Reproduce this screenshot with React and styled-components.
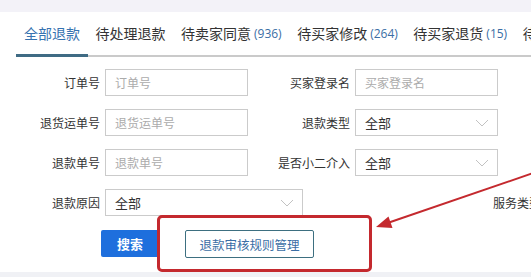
import React from "react"
import styled, { createGlobalStyle } from "styled-components"

const GlobalStyle = createGlobalStyle`
  html, body {
    margin: 0;
    padding: 0;
    background: #f0f1f5;
    font-family: "Noto Sans CJK SC", "Noto Sans", sans-serif;
    overflow: hidden;
  }
`

const Page = styled.div`
  position: relative;
  width: 531px;
  height: 277px;
  overflow: hidden;
  background: #f0f1f5;
`

const TopBand = styled.div`
  height: 12px;
  background: #f3f2f8;
`

const Panel = styled.div`
  background: #fff;
  height: 260px;
`

const TabBar = styled.div`
  display: flex;
  margin-left: 16px;
  box-shadow: inset 0 -2px 0 #cacaca;
  white-space: nowrap;
`

const Tab = styled.div`
  display: flex;
  align-items: center;
  box-sizing: border-box;
  height: 45px;
  padding: 0 7.5px 0 8px;
  font-size: 14px;
  color: ${p => (p.$active ? "#3672b0" : "#333")};
  border-bottom: 3px solid ${p => (p.$active ? "#3f6b84" : "transparent")};
`

const Count = styled.span`
  margin-left: 3px;
  font-family: "Open Sans", "Liberation Sans", sans-serif;
  font-size: 12px;
  color: #3a6ea5;
`

const Form = styled.div`
  display: flex;
  flex-direction: column;
  gap: 13px;
  padding: 12px 0 0 16px;
`

const Row = styled.div`
  display: flex;
  align-items: center;
  gap: 18px;
`

const Field = styled.div`
  display: flex;
  align-items: center;
  gap: 5px;
  margin-left: ${p => p.$offset || 0}px;
`

const Label = styled.div`
  width: ${p => (p.$w ? p.$w + "px" : "auto")};
  text-align: right;
  font-size: 12px;
  color: #333;
  white-space: nowrap;
`

const Box = styled.div`
  box-sizing: border-box;
  width: ${p => p.$w || 143}px;
  height: 27px;
  border: 1px solid #cbcbcb;
  display: flex;
  align-items: center;
  justify-content: space-between;
  padding: 0 8px 0 9px;
  font-size: ${p => (p.$placeholder ? 12 : 13)}px;
  color: ${p => (p.$placeholder ? "#ababab" : "#333")};
`

const Chevron = () => (
  <svg width="14" height="8" viewBox="0 0 14 8">
    <polyline points="1,1 7,7 13,1" fill="none" stroke="#c2c2c2" strokeWidth="1" />
  </svg>
)

const Buttons = styled.div`
  display: flex;
  gap: 26px;
  margin: 1px 0 0 85px;
`

const SearchButton = styled.div`
  width: 58px;
  height: 27px;
  display: flex;
  align-items: center;
  justify-content: center;
  background: #1e6fdd;
  border-radius: 2px;
  color: #fff;
  font-size: 13px;
  font-weight: 600;
`

const RuleButton = styled.div`
  box-sizing: border-box;
  width: 129px;
  height: 28px;
  display: flex;
  align-items: center;
  justify-content: center;
  border: 1px solid #3d6f80;
  border-radius: 2px;
  color: #3a6ea5;
  font-size: 12.5px;
`

const Highlight = styled.div`
  position: absolute;
  left: 157px;
  top: 215px;
  width: 215px;
  height: 57px;
  box-sizing: border-box;
  border: 3px solid #c4292e;
  border-radius: 5px;
  pointer-events: none;
`

const ArrowLayer = styled.svg`
  position: absolute;
  left: 0;
  top: 0;
  pointer-events: none;
`

const Input = ({ w, children }) => (
  <Box $w={w} $placeholder>{children}</Box>
)

const Select = ({ w, children }) => (
  <Box $w={w}>
    <span>{children}</span>
    <Chevron />
  </Box>
)

export default function App() {
  return (
    <Page>
      <GlobalStyle />
      <TopBand />
      <Panel>
        <TabBar>
          <Tab $active>全部退款</Tab>
          <Tab>待处理退款</Tab>
          <Tab>待卖家同意<Count>(936)</Count></Tab>
          <Tab>待买家修改<Count>(264)</Count></Tab>
          <Tab>待买家退货<Count>(15)</Count></Tab>
          <Tab>待买家</Tab>
        </TabBar>
        <Form>
          <Row>
            <Field>
              <Label $w={84}>订单号</Label>
              <Input>订单号</Input>
            </Field>
            <Field>
              <Label $w={84}>买家登录名</Label>
              <Input>买家登录名</Input>
            </Field>
          </Row>
          <Row>
            <Field>
              <Label $w={84}>退货运单号</Label>
              <Input>退货运单号</Input>
            </Field>
            <Field>
              <Label $w={84}>退款类型</Label>
              <Select>全部</Select>
            </Field>
          </Row>
          <Row>
            <Field>
              <Label $w={84}>退款单号</Label>
              <Input>退款单号</Input>
            </Field>
            <Field>
              <Label $w={84}>是否小二介入</Label>
              <Select>全部</Select>
            </Field>
          </Row>
          <Row>
            <Field>
              <Label $w={84}>退款原因</Label>
              <Select w={198}>全部</Select>
            </Field>
            <Field $offset={172}>
              <Label>服务类型</Label>
            </Field>
          </Row>
          <Buttons>
            <SearchButton>搜索</SearchButton>
            <RuleButton>退款审核规则管理</RuleButton>
          </Buttons>
        </Form>
      </Panel>
      <Highlight />
      <ArrowLayer width="531" height="277" viewBox="0 0 531 277">
        <line x1="389" y1="222.5" x2="545" y2="169" stroke="#c4292e" strokeWidth="2" />
        <polygon points="376,227 392.5,228 388.5,216.5" fill="#c4292e" />
      </ArrowLayer>
    </Page>
  )
}
